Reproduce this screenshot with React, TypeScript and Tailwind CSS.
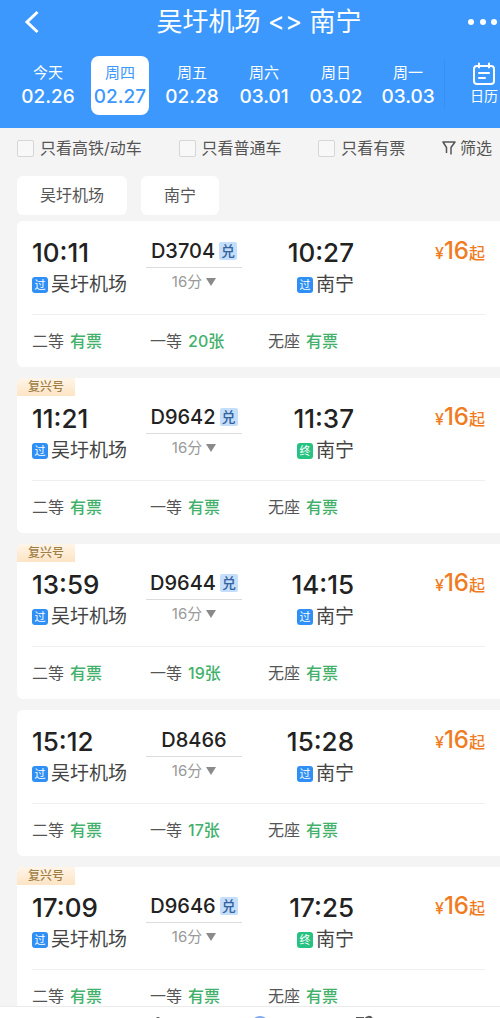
import React, { useState } from 'react'

type Seat = { name: string; left: string }

type Train = {
  code: string
  depart: string
  arrive: string
  terminal: boolean
  fuxing: boolean
  exchange: boolean
  seats: Seat[]
}

const days = [
  { week: '今天', date: '02.26' },
  { week: '周四', date: '02.27' },
  { week: '周五', date: '02.28' },
  { week: '周六', date: '03.01' },
  { week: '周日', date: '03.02' },
  { week: '周一', date: '03.03' },
]

const filters = ['只看高铁/动车', '只看普通车', '只看有票']

const seats = (first: string): Seat[] => [
  { name: '二等', left: '有票' },
  { name: '一等', left: first },
  { name: '无座', left: '有票' },
]

const trains: Train[] = [
  { code: 'D3704', depart: '10:11', arrive: '10:27', terminal: false, fuxing: false, exchange: true, seats: seats('20张') },
  { code: 'D9642', depart: '11:21', arrive: '11:37', terminal: true, fuxing: true, exchange: true, seats: seats('有票') },
  { code: 'D9644', depart: '13:59', arrive: '14:15', terminal: false, fuxing: true, exchange: true, seats: seats('19张') },
  { code: 'D8466', depart: '15:12', arrive: '15:28', terminal: false, fuxing: false, exchange: false, seats: seats('17张') },
  { code: 'D9646', depart: '17:09', arrive: '17:25', terminal: true, fuxing: true, exchange: true, seats: seats('有票') },
]

function CalendarIcon() {
  return (
    <svg width="24" height="24" viewBox="0 0 24 24" fill="none" stroke="currentColor" strokeWidth="2" strokeLinecap="round">
      <rect x="2" y="4" width="20" height="18" rx="3" />
      <path d="M7 1.5v4M17 1.5v4M7 11h10M7 16h6" />
    </svg>
  )
}

function FilterIcon() {
  return (
    <svg width="14" height="14" viewBox="0 0 14 14" fill="none" stroke="currentColor" strokeWidth="1.5" strokeLinejoin="round">
      <path d="M4.500 12V6.500L1 1h12L9 6.500V13.500" />
    </svg>
  )
}

function StationMark({ terminal }: { terminal: boolean }) {
  return (
    <span
      className={`flex h-4 w-4 shrink-0 items-center justify-center rounded-[3px] text-[11px] leading-none text-white ${
        terminal ? 'bg-[#26c281]' : 'bg-[#2f8ff5]'
      }`}
    >
      {terminal ? '终' : '过'}
    </span>
  )
}

function Header() {
  const [active, setActive] = useState(1)

  return (
    <header className="shrink-0 bg-[#3c98fc] text-white">
      <div className="grid h-11 grid-cols-[60px_1fr_42px] items-center">
        <button aria-label="返回" className="pl-6">
          <svg width="16" height="24" viewBox="0 0 16 24" fill="none" stroke="currentColor" strokeWidth="3">
            <path d="M13.500 2L3 12l10.500 10" />
          </svg>
        </button>
        <h1 className="text-center text-[26px] leading-8">吴圩机场 &lt;&gt; 南宁</h1>
        <button aria-label="更多" className="flex justify-end pr-0.5">
          <svg width="30" height="8" viewBox="0 0 30 8" fill="currentColor">
            <circle cx="3" cy="4" r="3" />
            <circle cx="15" cy="4" r="3" />
            <circle cx="26" cy="4" r="3" />
          </svg>
        </button>
      </div>
      <nav className="flex h-[84px] pt-3 pl-3">
        {days.map((day, i) => (
          <div key={day.date} className="flex flex-1 justify-center">
            <button
              onClick={() => setActive(i)}
              className={`flex h-[59px] w-[58px] flex-col items-center justify-center rounded-lg pb-0.5 ${
                i === active ? 'bg-white text-[#3c98fc]' : ''
              }`}
            >
              <span className="text-[15px] leading-6">{day.week}</span>
              <span className="text-[19px] leading-6 font-medium">{day.date}</span>
            </button>
          </div>
        ))}
        <div className="flex w-14 items-start justify-between">
          <span className="mt-1 h-12 w-px bg-[#3590f3]" />
          <button className="flex w-8 flex-col items-center pt-1.5">
            <CalendarIcon />
            <span className="text-sm leading-5">日历</span>
          </button>
        </div>
      </nav>
    </header>
  )
}

function FilterBar() {
  return (
    <div className="flex h-10 items-center justify-between pr-2 pl-[17px] text-base text-[#555]">
      {filters.map((name) => (
        <label key={name} className="flex items-center gap-1.5">
          <input
            type="checkbox"
            className="h-[17px] w-[17px] appearance-none rounded-xs border border-[#d6d6d6] bg-[#f8f8f8] checked:bg-[#3c98fc]"
          />
          {name}
        </label>
      ))}
      <button className="flex items-center gap-1">
        <FilterIcon />
        筛选
      </button>
    </div>
  )
}

function TrainCard({ train }: { train: Train }) {
  return (
    <li className="overflow-hidden rounded-l-md bg-white">
      {train.fuxing && (
        <div className="flex h-[18px] w-[58px] items-center justify-center bg-linear-to-b from-[#fff5e8] to-[#fde4c4] text-xs font-medium text-[#a07f47]">
          复兴号
        </div>
      )}
      <div className={`px-[15px] ${train.fuxing ? 'pt-[7px]' : 'pt-4'}`}>
        <div className="grid grid-cols-[114px_96px_112px_1fr] border-b border-[#efefef] pb-[13px]">
          <div>
            <div className="text-[26px] leading-8 font-medium text-[#222]">{train.depart}</div>
            <div className="flex h-8 items-center gap-[3px] text-[19px] text-[#444]">
              <StationMark terminal={false} />
              吴圩机场
            </div>
          </div>
          <div className="text-center">
            <div className="flex h-[31px] items-center justify-center gap-1 border-b border-[#dcdcdc] pb-0.5 text-xl font-medium text-[#222]">
              {train.code}
              {train.exchange && (
                <span className="flex h-[18px] w-[18px] items-center justify-center rounded-xs bg-[#c5defb] text-sm leading-none text-[#33639c]">
                  兑
                </span>
              )}
            </div>
            <button className="inline-flex h-7 items-center gap-1 text-[15px] text-[#999]">
              16分
              <svg width="10" height="8" viewBox="0 0 10 8" fill="#8a8a8a">
                <path d="M0 0h10L5 8z" />
              </svg>
            </button>
          </div>
          <div className="flex flex-col items-end">
            <div className="text-[26px] leading-8 font-medium text-[#222]">{train.arrive}</div>
            <div className="flex h-8 items-center gap-[3px] text-[19px] text-[#444]">
              <StationMark terminal={train.terminal} />
              南宁
            </div>
          </div>
          <div className="flex h-8 items-baseline justify-end text-[#f07c22]">
            <span className="text-base font-medium">¥</span>
            <span className="text-2xl leading-7 font-medium">16</span>
            <span className="text-base font-medium">起</span>
          </div>
        </div>
        <div className="flex h-[52px] items-center text-base">
          {train.seats.map((seat) => (
            <div key={seat.name} className="flex w-[118px] gap-1.5">
              <span className="text-[#555]">{seat.name}</span>
              <span className="font-medium text-[#43b16c]">{seat.left}</span>
            </div>
          ))}
        </div>
      </div>
    </li>
  )
}

function BottomBar() {
  return (
    <footer className="flex h-3 shrink-0 items-start justify-center gap-20 overflow-hidden border-t border-[#ececec] bg-white pt-2 pl-6">
      <svg width="24" height="24" viewBox="0 0 24 24" fill="none" stroke="#555" strokeWidth="2">
        <path d="M6 10c3-4 4-7 6-7s3 3 6 7" />
      </svg>
      <svg width="24" height="24" viewBox="0 0 24 24" fill="#7fa8ee">
        <circle cx="10" cy="10" r="9" />
      </svg>
      <svg width="24" height="24" viewBox="0 0 24 24" fill="none" stroke="#555" strokeWidth="2">
        <path d="M2 3h8M11 5c1-4 6-4 7-1v5" />
      </svg>
    </footer>
  )
}

function App() {
  return (
    <div className="flex h-screen flex-col bg-[#f4f4f4] font-['Inter','Noto_Sans_CJK_SC',sans-serif]">
      <Header />
      <main className="min-h-0 flex-1 overflow-y-auto [scrollbar-width:none]">
        <FilterBar />
        <div className="mt-2 mb-1.5 flex gap-3.5 pl-[17px] text-base text-[#555]">
          <button className="h-[39px] rounded-md bg-white px-[23px] pb-0.5">吴圩机场</button>
          <button className="h-[39px] rounded-md bg-white px-[23px] pb-0.5">南宁</button>
        </div>
        <ul className="space-y-[11px] pl-[17px]">
          {trains.map((train) => (
            <TrainCard key={train.code} train={train} />
          ))}
        </ul>
      </main>
      <BottomBar />
    </div>
  )
}

export default App
